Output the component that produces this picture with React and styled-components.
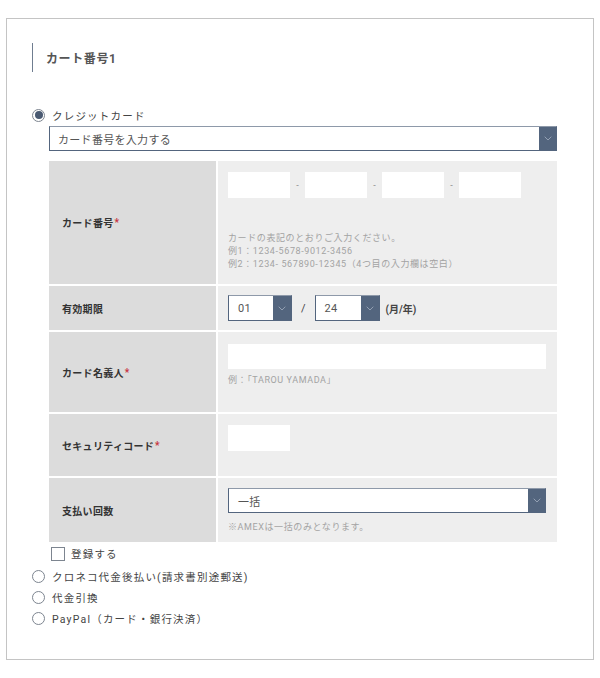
import React from "react";
import styled, { createGlobalStyle } from "styled-components";

const Global = createGlobalStyle`
  html, body { margin: 0; padding: 0; background: #fff; }
  body { font-family: "Roboto", "Noto Sans CJK JP", sans-serif; color: #444; }
  * { box-sizing: border-box; }
`;

const ACCENT = "#53657e";

const Panel = styled.section`
  margin: 18px 0 0 6px;
  width: 588px;
  height: 642px;
  border: 1px solid #c4c4c4;
  padding: 24px 36px 0 25px;
`;

const Heading = styled.h2`
  margin: 0;
  height: 29px;
  border-left: 1px solid #6f7d90;
  padding-left: 13px;
  display: flex;
  align-items: center;
  font-size: 12px;
  font-weight: 700;
  letter-spacing: 0.6px;
  color: #555;
`;

const OptionRow = styled.label`
  display: flex;
  align-items: center;
  gap: 7px;
  height: 16px;
  margin-top: ${(p) => p.$mt}px;
  font-size: 10.5px;
  letter-spacing: 1.2px;
  color: #444;
`;

const Radio = styled.span`
  width: 13px;
  height: 13px;
  border-radius: 50%;
  border: 1px solid #7d8590;
  display: flex;
  align-items: center;
  justify-content: center;
  flex: none;
  &::after {
    content: "";
    width: 8px;
    height: 8px;
    border-radius: 50%;
    background: ${(p) => (p.$checked ? "#4a5a72" : "transparent")};
  }
`;

const SelectBox = styled.div`
  display: flex;
  align-items: stretch;
  width: ${(p) => p.$w};
  height: ${(p) => p.$h}px;
  margin: ${(p) => p.$m || "0"};
  background: #fff;
  border: 1px solid ${ACCENT};
  border-top-color: #8e99a9;
  flex: none;
`;

const SelectText = styled.span`
  flex: 1;
  display: flex;
  align-items: center;
  padding-left: ${(p) => p.$pl}px;
  font-size: ${(p) => p.$fs}px;
  letter-spacing: 0.3px;
  color: #555;
`;

const Arrow = styled.span`
  width: ${(p) => p.$w}px;
  background: ${ACCENT};
  display: flex;
  align-items: center;
  justify-content: center;
  flex: none;
`;

const Chevron = () => (
  <svg width="8" height="5" viewBox="0 0 8 5">
    <path d="M0.7 0.7 L4 4 L7.3 0.7" fill="none" stroke="#93a0b3" strokeWidth="1" />
  </svg>
);

const Select = ({ text, w, h = 25, m, pl = 9, fs = 11, aw = 17 }) => (
  <SelectBox $w={w} $h={h} $m={m}>
    <SelectText $pl={pl} $fs={fs}>{text}</SelectText>
    <Arrow $w={aw}>
      <Chevron />
    </Arrow>
  </SelectBox>
);

const Table = styled.div`
  display: grid;
  grid-template-columns: 167px 339px;
  gap: 2px;
  margin: 10px 0 0 17px;
  background: #fff;
`;

const Label = styled.div`
  background: #dcdcdc;
  min-height: ${(p) => p.$h}px;
  display: flex;
  align-items: center;
  padding-left: 13px;
  font-size: 10px;
  font-weight: 700;
  letter-spacing: 0.3px;
  color: #333;
`;

const Req = styled.span`
  color: #c8323c;
  margin-left: 1px;
`;

const Value = styled.div`
  background: #eeeeee;
  min-height: ${(p) => p.$h}px;
  padding: ${(p) => p.$pt}px 11px 0 10px;
  display: flex;
  flex-direction: column;
  justify-content: ${(p) => (p.$center ? "center" : "flex-start")};
`;

const Inline = styled.div`
  display: flex;
  align-items: center;
  gap: ${(p) => p.$gap}px;
`;

const Field = styled.div`
  width: ${(p) => p.$w};
  height: ${(p) => p.$h}px;
  background: #fff;
  flex: none;
`;

const Dash = styled.span`
  width: 15px;
  text-align: center;
  font-size: 9px;
  color: #888;
`;

const Help = styled.div`
  margin-top: ${(p) => p.$mt}px;
  font-size: 9px;
  line-height: 13px;
  letter-spacing: 0.6px;
  color: #a3a3a3;
`;

const Slash = styled.span`
  font-size: 11px;
  color: #444;
`;

const Unit = styled.span`
  font-size: 10px;
  font-weight: 700;
  color: #444;
  margin-left: -3px;
`;

const CheckRow = styled.label`
  display: flex;
  align-items: center;
  gap: 6px;
  margin: 4px 0 0 19px;
  font-size: 10.5px;
  letter-spacing: 1.2px;
  color: #444;
`;

const Box = styled.span`
  width: 14px;
  height: 14px;
  border: 1px solid #7d8590;
  background: #fff;
  flex: none;
`;

export default function App() {
  return (
    <>
      <Global />
      <Panel>
        <Heading>カート番号1</Heading>

        <OptionRow $mt={35}>
          <Radio $checked />
          クレジットカード
        </OptionRow>
        <Select text="カード番号を入力する" w="508px" m="3px 0 0 17px" pl={8} />

        <Table>
          <Label $h={123}>
            カード番号<Req>*</Req>
          </Label>
          <Value $h={123} $pt={11}>
            <Inline $gap={0}>
              <Field $w="62px" $h={26} />
              <Dash>-</Dash>
              <Field $w="62px" $h={26} />
              <Dash>-</Dash>
              <Field $w="62px" $h={26} />
              <Dash>-</Dash>
              <Field $w="62px" $h={26} />
            </Inline>
            <Help $mt={34}>
              カードの表記のとおりご入力ください。
              <br />
              例1：1234-5678-9012-3456
              <br />
              例2：1234- 567890-12345（4つ目の入力欄は空白）
            </Help>
          </Value>

          <Label $h={44}>有効期限</Label>
          <Value $h={44} $pt={0} $center>
            <Inline $gap={9}>
              <Select text="01" w="64px" h={26} aw={18} />
              <Slash>/</Slash>
              <Select text="24" w="65px" h={26} aw={18} />
              <Unit>(月/年)</Unit>
            </Inline>
          </Value>

          <Label $h={80}>
            カード名義人<Req>*</Req>
          </Label>
          <Value $h={80} $pt={12}>
            <Field $w="318px" $h={25} />
            <Help $mt={5}>例：「TAROU YAMADA」</Help>
          </Value>

          <Label $h={62}>
            セキュリティコード<Req>*</Req>
          </Label>
          <Value $h={62} $pt={11}>
            <Field $w="62px" $h={26} />
          </Value>

          <Label $h={64}>支払い回数</Label>
          <Value $h={64} $pt={10}>
            <Select text="一括" w="318px" h={25} />
            <Help $mt={8}>※AMEXは一括のみとなります。</Help>
          </Value>
        </Table>

        <CheckRow>
          <Box />
          登録する
        </CheckRow>

        <OptionRow $mt={7}>
          <Radio />
          クロネコ代金後払い(請求書別途郵送)
        </OptionRow>
        <OptionRow $mt={5}>
          <Radio />
          代金引換
        </OptionRow>
        <OptionRow $mt={5}>
          <Radio />
          PayPal（カード・銀行決済）
        </OptionRow>
      </Panel>
    </>
  );
}
